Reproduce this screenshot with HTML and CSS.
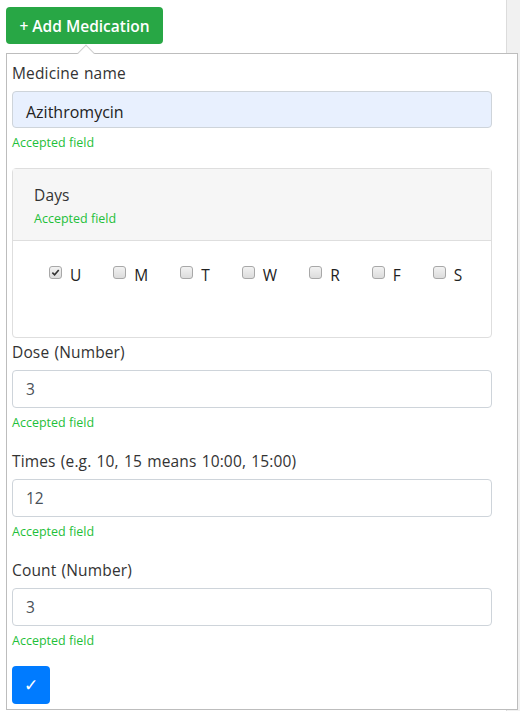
FILE: index.html
```html
<!DOCTYPE html>
<html>
<head>
<meta charset="utf-8">
<link rel="stylesheet" href="styles.css">
</head>
<body>
<div class="page">
  <main class="main">
    <button class="btn-add">+ Add Medication</button>
  </main>
  <aside class="side"></aside>
</div>
<div class="popover">
  <div class="arrow"></div>
  <form class="form">
    <div class="group">
      <label class="label">Medicine name</label>
      <div class="input autofill">Azithromycin</div>
      <div class="ok">Accepted field</div>
    </div>
    <div class="card">
      <div class="card-head">
        <div class="label">Days</div>
        <div class="ok">Accepted field</div>
      </div>
      <div class="card-body">
        <label class="day"><span class="cb checked"><svg viewBox="0 0 10 10" width="9" height="9"><path d="M1.5 5.2 L4 7.6 L8.6 2.2" fill="none" stroke="#333" stroke-width="1.8"/></svg></span>U</label>
        <label class="day"><span class="cb"></span>M</label>
        <label class="day"><span class="cb"></span>T</label>
        <label class="day"><span class="cb"></span>W</label>
        <label class="day"><span class="cb"></span>R</label>
        <label class="day"><span class="cb"></span>F</label>
        <label class="day"><span class="cb"></span>S</label>
      </div>
    </div>
    <div class="group after-card">
      <label class="label">Dose (Number)</label>
      <div class="input">3</div>
      <div class="ok">Accepted field</div>
    </div>
    <div class="group">
      <label class="label">Times (e.g. 10, 15 means 10:00, 15:00)</label>
      <div class="input">12</div>
      <div class="ok">Accepted field</div>
    </div>
    <div class="group">
      <label class="label">Count (Number)</label>
      <div class="input">3</div>
      <div class="ok">Accepted field</div>
    </div>
    <button type="button" class="btn-ok">✓</button>
  </form>
</div>
</body>
</html>
```
FILE: styles.css
```css
* { box-sizing: border-box; }
html, body { margin: 0; padding: 0; }
body {
  font-family: "Open Sans", sans-serif;
  color: #333;
  background: #fff;
  width: 520px;
  height: 711px;
  overflow: hidden;
  position: relative;
}
.page {
  display: flex;
  height: 711px;
}
.main {
  flex: 1;
  padding: 7px 0 0 6px;
}
.side {
  width: 14px;
  background: #f1f1f1;
  border-left: 1px solid #dcdcdc;
}
.btn-add {
  background: #28a745;
  color: #fff;
  border: none;
  border-radius: 4px;
  height: 37px;
  width: 157px;
  font-family: "Open Sans", sans-serif;
  font-size: 15.5px;
  font-weight: 600;
  padding: 0;
}
.popover {
  position: absolute;
  left: 6px;
  top: 53px;
  width: 512px;
  height: 657px;
  background: #fff;
  border: 1px solid #bdbdbd;
  padding: 0 0 0 5px;
}
.arrow {
  position: absolute;
  left: 73px;
  top: -7px;
  width: 12px;
  height: 12px;
  background: #fff;
  border-left: 1px solid #cfcfcf;
  border-top: 1px solid #cfcfcf;
  transform: rotate(45deg);
}
.form {
  width: 480px;
  display: flex;
  flex-direction: column;
}
.group {
  display: flex;
  flex-direction: column;
}
.label {
  font-size: 15.5px;
  word-spacing: 1px;
  letter-spacing: 0.15px;
  color: #333;
  line-height: 20px;
  margin-top: 9px;
  margin-bottom: 8px;
}
.after-card .label { margin-top: 4px; }
.input {
  height: 38px;
  border: 1px solid #ced4da;
  border-radius: 4px;
  padding: 0 13px;
  font-size: 15.5px;
  line-height: 36px;
  color: #495057;
  overflow: hidden;
}
.input.autofill {
  background: #e8f0fe;
  color: #222;
  height: 37px;
  font-size: 16px;
  line-height: 40px;
}
.ok {
  font-size: 12.5px;
  color: #1fc03a;
  line-height: 16px;
  margin-top: 7px;
  margin-bottom: 11px;
}
.group:first-child .ok { margin-bottom: 17px; }
.card {
  border: 1px solid #dedede;
  border-radius: 4px;
}
.card-head {
  background: #f6f6f6;
  border-bottom: 1px solid #dedede;
  padding: 7px 21px 0;
  height: 72px;
}
.card-head .label { margin-bottom: 6px; }
.card-head .ok { margin-top: 0; margin-bottom: 0; }
.card-body {
  display: flex;
  gap: 32px;
  padding: 24px 0 0 36px;
  height: 96px;
}
.day {
  display: flex;
  align-items: flex-start;
  gap: 8px;
  font-size: 15.5px;
  color: #222;
  line-height: 20px;
}
.cb {
  width: 13px;
  height: 13px;
  margin-top: 1px;
  border: 1px solid #a8a8a8;
  border-radius: 3px;
  background: linear-gradient(#f2f2f2, #dcdcdc);
  display: flex;
  align-items: center;
  justify-content: center;
}
.btn-ok {
  margin-top: 6px;
  width: 38px;
  height: 38px;
  background: #007bff;
  color: #fff;
  border: none;
  border-radius: 4px;
  font-size: 17px;
  padding: 0;
  font-family: "DejaVu Sans", sans-serif;
}
```
